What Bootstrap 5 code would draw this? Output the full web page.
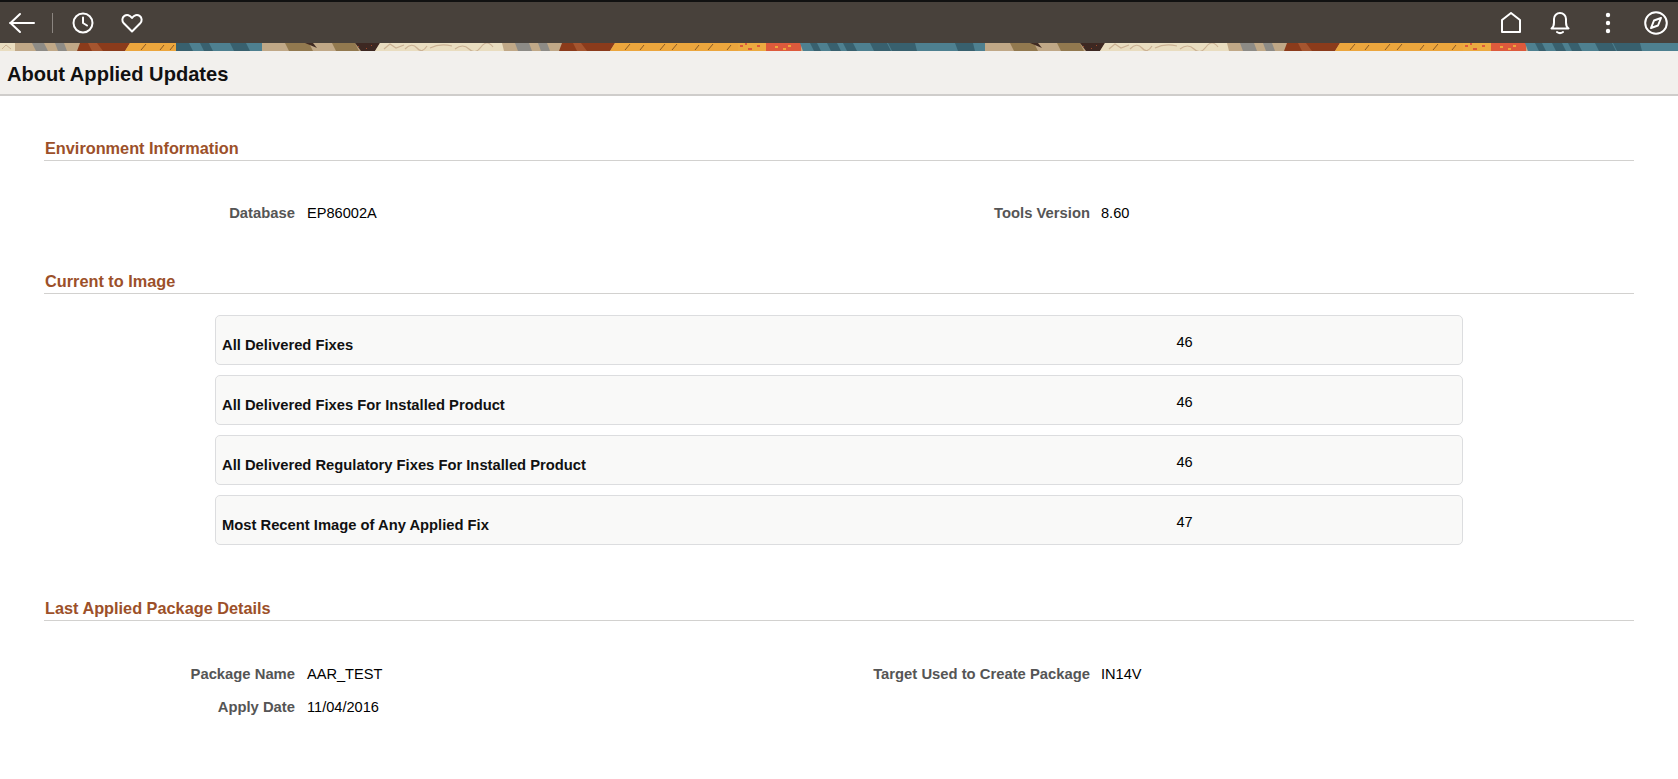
<!DOCTYPE html>
<html lang="en"><head><meta charset="utf-8"><title>About Applied Updates</title>
<link href="https://cdn.jsdelivr.net/npm/bootstrap@5.3.0/dist/css/bootstrap.min.css" rel="stylesheet">
<style>
html,body{height:100%;overflow:hidden}
body{font-family:"Liberation Sans",Arial,sans-serif;color:#000;background:#fff;font-size:14.6px}
.topbar{height:43px;background:#48413b;border-top:2px solid #111;padding:0 10px 0 8px}
.topbar svg{display:block;fill:none;stroke:#fff;stroke-width:2;stroke-linecap:round;stroke-linejoin:round}
.sep{width:1px;height:20px;background:#8b8580;margin:0 19px 0 16px}
.ic-heart{margin-left:27px}
.ic-bell{margin-left:29px}
.ic-dots{margin-left:28px}
.ic-comp{margin-left:26px}
.banner{height:8px;display:block;width:100%}
.titlebar{height:45px;background:#f2f0ed;border-bottom:2px solid #cfcdcb;padding:3px 7px 0;font-size:20.1px;font-weight:700;color:#111}
.sect{margin:0 44px;border-bottom:1px solid #d2d1cf;color:#9c5029;font-weight:700;font-size:16.3px;line-height:19px;padding:0 0 2px 1px}
.fld{color:#555;font-weight:700;text-align:right;font-size:14.8px}
.pair{height:33px;align-items:center}
.lbl1{width:295px}
.val1{width:478px;padding-left:12px}
.lbl2{width:317px}
.val2{padding-left:11px}
.rowbox{margin-left:215px;width:1248px;height:50px;background:#f9f9f8;border:1px solid #dcdddf;border-radius:5px;margin-bottom:10px;font-weight:700;padding-left:6px;color:#111;font-size:14.76px}
.rowbox .cap{width:953.5px;padding-top:10px}
.rowbox .num{font-weight:400;padding-top:5px;color:#000;font-size:14.6px;padding-left:1px}
.s1{padding-top:43px}
.s2{padding-top:42px}
.s3{padding-top:44px}
.gap-a{margin-top:36px}
.gap-b{margin-top:21px}
.gap-c{margin-top:37px}
</style></head><body>
<div class="topbar d-flex align-items-center">
<svg width="28" height="24" viewBox="0 0 28 24"><path d="M26 12H2M12 3l-9.500 9 9.500 9"/></svg>
<span class="sep"></span>
<svg width="22" height="22" viewBox="0 0 22 22"><circle cx="11" cy="11" r="9.500"/><path d="M11 5.500V11l4 2.500"/></svg>
<svg class="ic-heart" width="22" height="20" viewBox="0 0 22 20"><path d="M11 18.500 2.800 10.300C.6 8 1 4.500 3.400 2.900 5.800 1.300 9 2 11 5c2-3 5.200-3.700 7.600-2.100C21 4.500 21.400 8 19.200 10.300Z"/></svg>
<div class="ms-auto d-flex align-items-center">
<svg width="20" height="21" viewBox="0 0 20 21"><path d="M1 20V8L10 1l9 7v12Z"/></svg>
<svg class="ic-bell" width="20" height="24" viewBox="0 0 20 24"><path d="M1.500 17.500c2-1.500 2.500-3 2.500-6V8a6 6 0 0 1 12 0v3.500c0 3 .5 4.500 2.500 6ZM7 21c2 1.500 4 1.500 6 0"/></svg>
<svg class="ic-dots" width="20" height="24" viewBox="0 0 20 24"><circle cx="10" cy="4" r="2.200" fill="#fff" stroke="none"/><circle cx="10" cy="12" r="2.200" fill="#fff" stroke="none"/><circle cx="10" cy="20" r="2.200" fill="#fff" stroke="none"/></svg>
<svg class="ic-comp" width="24" height="24" viewBox="0 0 24 24"><circle cx="12" cy="12" r="10.800"/><path d="M17 7l-7 2.500L7 17l7-2.500Z"/></svg>
</div>
</div>
<svg class="banner" viewBox="0 0 1678 8" preserveAspectRatio="none" aria-hidden="true">
<defs>
<g id="per">
<rect x="260" width="727" height="8" fill="#c0a887"/>
<path d="M285 0h24l4 8H289ZM332 0h23l4 8H336Z" fill="#92794f"/>
<path d="M305 0h8l4 5Z" fill="#3f2a22"/>
<path d="M355 0h25l-5 8H361Z" fill="#3d2822"/>
<path d="M358 3h1v1h-1ZM366 5h1v1h-1ZM371 2h1v1h-1Z" fill="#a0482a"/>
<path d="M380 0h122l2 8H375Z" fill="#e9ddc0"/>
<path d="M384 6l6-5 6 4 8-3M405 6q7-7 12-1t10-2M430 5q10-5 22-2M455 6q8-6 14 0t12-2 12 0" fill="none" stroke="#cbb294" stroke-width="1.200"/>
<path d="M515 0h14l3 8H518ZM538 0h9l3 8H541Z" fill="#8d8b86"/>
<path d="M562 0h53l-5 8H559Z" fill="#8b3b1b"/>
<path d="M573 0h8l6 8H577Z" fill="#a5552f"/>
<path d="M615 0h125v8H610Z" fill="#eca63d"/>
<path d="M625 7l5-6M640 7l4-5M660 7l5-6M672 7l5-6M695 7l4-5M708 7l5-6M727 7l4-5" stroke="#8a5a25" stroke-width="1"/>
<path d="M738 0h30v8H738Z" fill="#ecaa40"/><path d="M740 2h3v2h-3ZM748 5h4v2h-4ZM757 2h3v2h-3ZM745 0h2v2h-2Z" fill="#dd5a3c"/>
<rect x="766" width="35" height="8" fill="#dd5a3c"/><path d="M775 3h3v2h-3ZM788 2h3v2h-3ZM783 5h3v2h-3Z" fill="#eca63d"/>
<path d="M800 0h185l4 8H803Z" fill="#4e8090"/>
<path d="M810 0h7l4 8h-7ZM827 0h10l4 8H831ZM843 0h10l4 8H847ZM870 0h17l4 8H874ZM888 0h27l2 8H892ZM955 0h18l2 8H958Z" fill="#38606e"/>
</g>
</defs>
<use href="#per"/>
<use href="#per" x="725"/>
<rect width="262" height="8" fill="#c0a887"/>
<rect width="15" height="8" fill="#e9ddc0"/>
<path d="M2 6l4-4 5 4" fill="none" stroke="#cbb294"/>
<path d="M32 0h12l4 8H36ZM55 0h9l3 8H58Z" fill="#8d8b86"/>
<path d="M80 0h50l-5 8H77Z" fill="#8b3b1b"/><path d="M88 0h9l6 8H92Z" fill="#a5552f"/>
<path d="M130 0h46v8H125Z" fill="#eca63d"/><path d="M141 7l5-6M160 7l4-5M170 7l4-5" stroke="#8a5a25"/>
<rect x="176" width="86" height="8" fill="#4e8090"/>
<path d="M176 0h13l4 8h-17ZM200 0h9l4 8h-9ZM230 0h16l4 8H234Z" fill="#38606e"/>
</svg>
<div class="titlebar d-flex align-items-center">About Applied Updates</div>
<div class="s1"><div class="sect">Environment Information</div></div>
<div class="d-flex pair gap-a"><div class="fld lbl1">Database</div><div class="val1">EP86002A</div><div class="fld lbl2">Tools Version</div><div class="val2">8.60</div></div>
<div class="s2"><div class="sect">Current to Image</div></div>
<div class="gap-b">
<div class="rowbox d-flex align-items-center"><div class="cap">All Delivered Fixes</div><div class="num">46</div></div>
<div class="rowbox d-flex align-items-center"><div class="cap">All Delivered Fixes For Installed Product</div><div class="num">46</div></div>
<div class="rowbox d-flex align-items-center"><div class="cap">All Delivered Regulatory Fixes For Installed Product</div><div class="num">46</div></div>
<div class="rowbox d-flex align-items-center"><div class="cap">Most Recent Image of Any Applied Fix</div><div class="num">47</div></div>
</div>
<div class="s3"><div class="sect">Last Applied Package Details</div></div>
<div class="d-flex pair gap-c"><div class="fld lbl1">Package Name</div><div class="val1">AAR_TEST</div><div class="fld lbl2">Target Used to Create Package</div><div class="val2">IN14V</div></div>
<div class="d-flex pair"><div class="fld lbl1">Apply Date</div><div class="val1">11/04/2016</div></div>
<script src="https://cdn.jsdelivr.net/npm/bootstrap@5.3.0/dist/js/bootstrap.bundle.min.js"></script>
</body></html>
